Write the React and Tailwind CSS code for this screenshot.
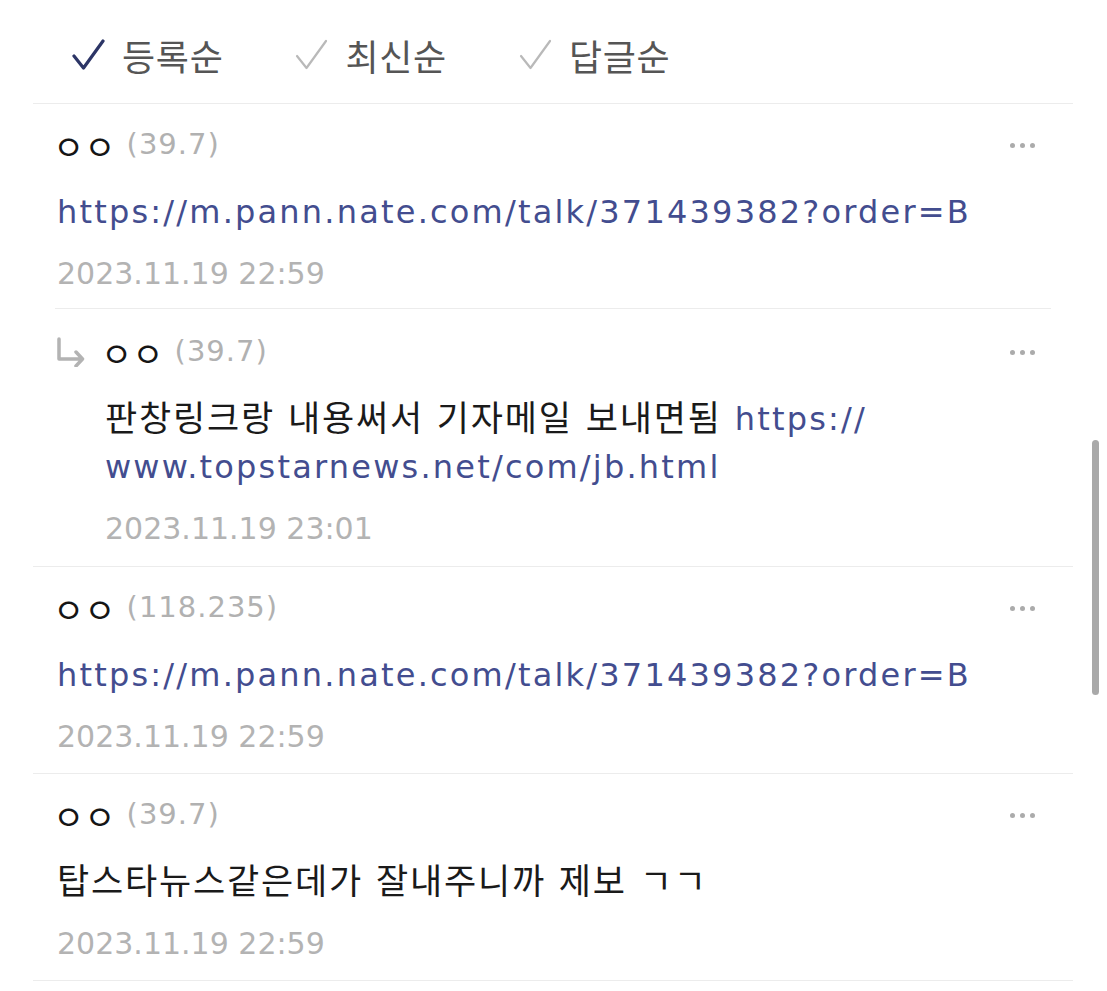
import React from "react";

const tabs = [
  { label: "등록순", active: true },
  { label: "최신순", active: false },
  { label: "답글순", active: false },
];

const threads = [
  {
    comment: {
      name: "ㅇㅇ",
      ip: "39.7",
      body: [{ t: "link", v: "https://m.pann.nate.com/talk/371439382?order=B" }],
      date: "2023.11.19 22:59",
    },
    replies: [
      {
        name: "ㅇㅇ",
        ip: "39.7",
        body: [
          { t: "text", v: "판창링크랑 내용써서 기자메일 보내면됨 " },
          { t: "link", v: "https://" },
          { t: "br" },
          { t: "link", v: "www.topstarnews.net/com/jb.html" },
        ],
        date: "2023.11.19 23:01",
      },
    ],
  },
  {
    comment: {
      name: "ㅇㅇ",
      ip: "118.235",
      body: [{ t: "link", v: "https://m.pann.nate.com/talk/371439382?order=B" }],
      date: "2023.11.19 22:59",
    },
    replies: [],
  },
  {
    comment: {
      name: "ㅇㅇ",
      ip: "39.7",
      body: [{ t: "text", v: "탑스타뉴스같은데가 잘내주니까 제보 ㄱㄱ" }],
      date: "2023.11.19 22:59",
    },
    replies: [],
  },
];

const Check = ({ active }) => (
  <svg width="33" height="31" viewBox="0 0 33 31" fill="none" className="shrink-0">
    <path
      d="M2 17 L11.5 29 L31 2"
      stroke={active ? "#2c3566" : "#b9b9b9"}
      strokeWidth={active ? 3.2 : 2.2}
      strokeLinecap="round"
      strokeLinejoin="round"
    />
  </svg>
);

const ReplyArrow = () => (
  <svg width="28" height="30" viewBox="0 0 28 30" fill="none" className="ml-[-48px] mr-[20px] shrink-0">
    <path
      d="M2 2 V22 H25 M19 15 L25.5 22 L19 29"
      stroke="#b3b3b3"
      strokeWidth="3.5"
      strokeLinecap="round"
      strokeLinejoin="round"
    />
  </svg>
);

const More = () => (
  <div className="ml-auto mr-[38px] flex items-center gap-[5px]">
    <span className="w-[5px] h-[5px] rounded-full bg-[#ababab]" />
    <span className="w-[5px] h-[5px] rounded-full bg-[#ababab]" />
    <span className="w-[5px] h-[5px] rounded-full bg-[#ababab]" />
  </div>
);

const Comment = ({ item, reply, hasReplies }) => (
  <div
    className={`${reply ? "pt-[23px] pl-[72px] pb-[17px]" : "pt-[21px] pl-[24px]"} ${
      hasReplies ? "pb-[14px]" : reply ? "" : "pb-[16px]"
    }`}
  >
    <div className="h-10 flex items-center">
      {reply && <ReplyArrow />}
      <span className="ml-[-4px] text-[34px] text-[#151515] font-['Noto_Sans_CJK_KR',sans-serif]">
        {item.name}
      </span>
      <span className="ml-[11px] text-[29px] tracking-[1px] text-[#b1b1b1] font-['DejaVu_Sans',sans-serif]">
        ({item.ip})
      </span>
      <More />
    </div>
    <div className="mt-[23px] leading-[48px] text-[35px] tracking-[1.8px] text-[#1a1a1a] font-['DejaVu_Sans','Noto_Sans_CJK_KR',sans-serif]">
      {item.body.map((seg, i) =>
        seg.t === "br" ? (
          <br key={i} />
        ) : seg.t === "link" ? (
          <span
            key={i}
            className="align-top text-[32px] tracking-[2.2px] text-[#434d8f] font-['DejaVu_Sans',sans-serif]"
          >
            {seg.v}
          </span>
        ) : (
          <span key={i} className="align-top">
            {seg.v}
          </span>
        )
      )}
    </div>
    <div className="mt-[18px] h-10 leading-10 text-[30px] text-[#b3b3b3] font-['DejaVu_Sans',sans-serif]">
      {item.date}
    </div>
  </div>
);

export default function App() {
  return (
    <div className="relative w-[1107px] h-[991px] overflow-hidden bg-white">
      <div className="px-[33px] w-[1107px]">
        <div className="w-[1040px]">
          <div className="h-[104px] pt-[6px] pl-[39px] flex items-center gap-[72px] border-b border-[#ececec]">
            {tabs.map((tab) => (
              <div key={tab.label} className="flex items-center gap-[17px]">
                <Check active={tab.active} />
                <span className="text-[36px] tracking-[0.7px] text-[#555555] font-['Noto_Sans_CJK_KR',sans-serif]">
                  {tab.label}
                </span>
              </div>
            ))}
          </div>

          {threads.map((th, i) => (
            <div key={i} className="border-b border-[#ececec]">
              <Comment item={th.comment} hasReplies={th.replies.length > 0} />
              {th.replies.map((r, j) => (
                <React.Fragment key={j}>
                  <div className="mx-[22px] h-px bg-[#ececec]" />
                  <Comment item={r} reply />
                </React.Fragment>
              ))}
            </div>
          ))}
        </div>
      </div>

      <div className="absolute left-[1092px] top-[440px] w-[7px] h-[255px] rounded-full bg-[#a9a9a9]" />
    </div>
  );
}
